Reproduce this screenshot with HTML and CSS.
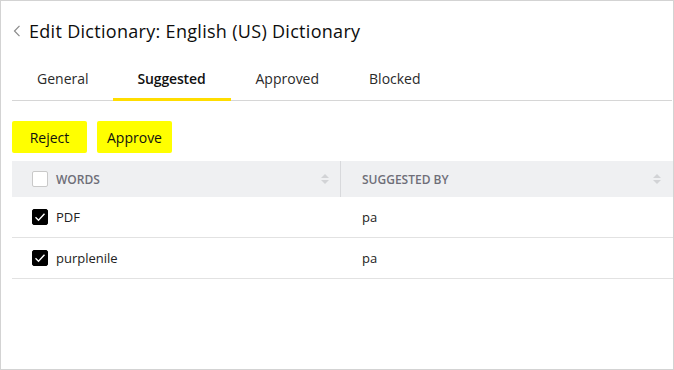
FILE: index.html
```html
<!DOCTYPE html>
<html lang="en">
<head>
<meta charset="utf-8">
<title>Edit Dictionary</title>
<link rel="stylesheet" href="styles.css">
</head>
<body>
<div class="frame">
  <header class="title-bar">
    <span class="back" aria-hidden="true">
      <svg width="8" height="12" viewBox="0 0 8 12"><path d="M6.5 0.8 L1.5 6 L6.5 11.2" fill="none" stroke="#8a8a8a" stroke-width="1.2"/></svg>
    </span>
    <h1 class="title">Edit Dictionary: English (US) Dictionary</h1>
  </header>
  <nav class="tabs">
    <span class="tab">General</span>
    <span class="tab active">Suggested</span>
    <span class="tab">Approved</span>
    <span class="tab">Blocked</span>
  </nav>
  <div class="actions">
    <button class="btn">Reject</button>
    <button class="btn">Approve</button>
  </div>
  <div class="table">
    <div class="row head">
      <div class="cell first">
        <span class="cb"></span>
        <span class="label">WORDS</span>
        <span class="sort"><svg width="8" height="10" viewBox="0 0 8 10"><path d="M4 0 L8 4 L0 4Z M0 6 L8 6 L4 10Z" fill="#d2d3d6"/></svg></span>
      </div>
      <div class="cell second">
        <span class="label">SUGGESTED BY</span>
        <span class="sort"><svg width="8" height="10" viewBox="0 0 8 10"><path d="M4 0 L8 4 L0 4Z M0 6 L8 6 L4 10Z" fill="#d2d3d6"/></svg></span>
      </div>
    </div>
    <div class="row body">
      <div class="cell first"><span class="cb checked"><svg width="12" height="10" viewBox="0 0 12 10"><path d="M1.5 5.2 L4.5 8.2 L10.5 1.8" fill="none" stroke="#fff" stroke-width="1.4"/></svg></span><span class="text">PDF</span></div>
      <div class="cell second"><span class="text">pa</span></div>
    </div>
    <div class="row body">
      <div class="cell first"><span class="cb checked"><svg width="12" height="10" viewBox="0 0 12 10"><path d="M1.5 5.2 L4.5 8.2 L10.5 1.8" fill="none" stroke="#fff" stroke-width="1.4"/></svg></span><span class="text">purplenile</span></div>
      <div class="cell second"><span class="text">pa</span></div>
    </div>
  </div>
</div>
</body>
</html>
```
FILE: styles.css
```css
* { box-sizing: border-box; }
html, body { margin: 0; padding: 0; }
body {
  font-family: "Open Sans", "Noto Sans", sans-serif;
  color: #1a1a1a;
  background: #fff;
}
.frame {
  width: 674px;
  height: 370px;
  border: 1px solid #d3d3d3;
  padding: 0 0 0 11px;
  overflow: hidden;
}
.title-bar {
  display: flex;
  align-items: center;
  height: 60px;
  padding-bottom: 1px;
}
.back { display: flex; width: 17px; padding-left: 1px; }
.title {
  margin: 0;
  font-size: 18px;
  font-weight: 500;
  color: #0d0d0d;
  letter-spacing: 0.3px;
}
.tabs {
  display: flex;
  border-bottom: 1px solid #d6d6d6;
  height: 40px;
  margin-right: 1px;
}
.tab {
  padding: 0 25px;
  font-size: 14px;
  line-height: 36px;
  color: #2a2a2a;
  border-bottom: 3px solid transparent;
  margin-bottom: -1px;
}
.tab:first-child { padding-left: 25px; padding-right: 24px; }
.tab.active { border-bottom-color: #ffdd00; font-weight: 600; color: #111; letter-spacing: -0.15px; }
.actions {
  display: flex;
  gap: 10px;
  padding-top: 20px;
  height: 60px;
}
.btn {
  font-family: inherit;
  font-size: 14px;
  font-weight: 500;
  color: #111;
  background: #ffff00;
  border: none;
  border-radius: 2px;
  height: 32px;
  width: 75px;
  padding: 0;
  text-align: center;
}
.table { display: flex; flex-direction: column; }
.row { display: grid; grid-template-columns: 329px 1fr; }
.row.head { background: #eff0f2; height: 36px; }
.row.body { height: 41px; border-bottom: 1px solid #e2e2e2; }
.cell { display: flex; align-items: center; }
.cell.first { padding-left: 20px; }
.cell.second { padding-left: 21px; }
.head .cell.first { border-right: 1px solid #d8d9dc; }
.label {
  font-size: 12px;
  font-weight: 600;
  color: #6e6e78;
  flex: 1;
}
.sort { display: flex; padding-right: 11px; }
.head .cell.second .sort { padding-right: 12px; }
.cb {
  width: 16px;
  height: 16px;
  border: 1px solid #c9c9c9;
  border-radius: 2px;
  background: #fff;
  margin-right: 8px;
  display: flex;
  align-items: center;
  justify-content: center;
}
.cb.checked { background: #000; border-color: #000; }
.text { font-size: 13px; color: #222; }
```
